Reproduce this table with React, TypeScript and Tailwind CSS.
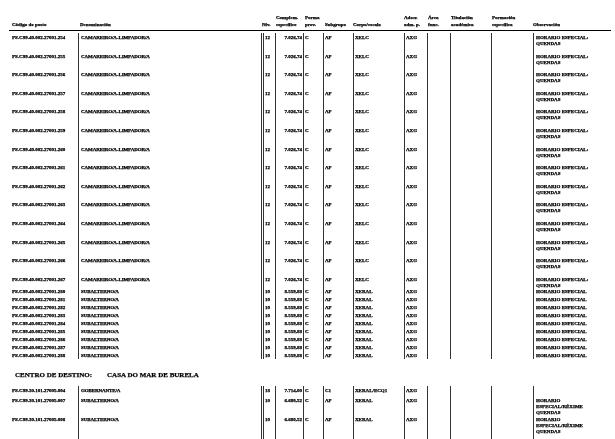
const grid =
  "grid grid-cols-[78px_183px_14px_28px_20px_30px_51px_23px_23px_41px_42px_1fr]";

type Post = {
  code: string;
  name: string;
  niv: string;
  comp: string;
  sub: string;
  corpo: string;
  obs: string[];
  h: string;
};

const camareiro = (n: number, h: string): Post => ({
  code: `PS.C99.40.002.27001.${n}`,
  name: "CAMAREIRO/A-LIMPADOR/A",
  niv: "12",
  comp: "7.026,74",
  sub: "AP",
  corpo: "XELC",
  obs: ["HORARIO ESPECIAL:", "QUENDAS"],
  h,
});

const subalterno = (n: number): Post => ({
  code: `PS.C99.40.002.27001.${n}`,
  name: "SUBALTERNO/A",
  niv: "10",
  comp: "8.559,88",
  sub: "AP",
  corpo: "XERAL",
  obs: ["HORARIO ESPECIAL"],
  h: "h-[8px]",
});

const firstBlock: Post[] = [
  ...[254, 255, 256, 257, 258, 259, 260, 261, 262, 263, 264, 265, 266].map((n) =>
    camareiro(n, "h-[18.6px]")
  ),
  camareiro(267, "h-[12px]"),
  ...[280, 281, 282, 283, 284, 285, 286, 287, 288].map(subalterno),
];

const burela: Post[] = [
  {
    code: "PS.C99.30.101.27005.004",
    name: "GOBERNANTE/A",
    niv: "18",
    comp: "7.714,00",
    sub: "C1",
    corpo: "XERAL/ECQ1",
    obs: [],
    h: "h-[10px]",
  },
  {
    code: "PS.C99.30.101.27005.007",
    name: "SUBALTERNO/A",
    niv: "10",
    comp: "6.680,52",
    sub: "AP",
    corpo: "XERAL",
    obs: ["HORARIO", "ESPECIAL/RÉXIME", "QUENDAS"],
    h: "h-[19px]",
  },
  {
    code: "PS.C99.30.101.27005.008",
    name: "SUBALTERNO/A",
    niv: "10",
    comp: "6.680,52",
    sub: "AP",
    corpo: "XERAL",
    obs: ["HORARIO", "ESPECIAL/RÉXIME", "QUENDAS"],
    h: "h-[24px]",
  },
];

function PostRow({ p }: { p: Post }) {
  const cell = "border-l border-[#333] pt-[2px]";
  return (
    <div className={`${grid} ${p.h}`}>
      <div className="pl-[12px] pt-[2px]">{p.code}</div>
      <div className={`${cell} pl-[2px] tracking-[-0.1px]`}>{p.name}</div>
      <div className="border-l-[3px] border-double border-[#333] pl-[1px] pt-[2px]">{p.niv}</div>
      <div className={`${cell} pr-[1px] text-right`}>{p.comp}</div>
      <div className={`${cell} pl-[1px]`}>C</div>
      <div className={`${cell} pl-[1px]`}>{p.sub}</div>
      <div className={`${cell} pl-[1px]`}>{p.corpo}</div>
      <div className={`${cell} pl-[1px]`}>AXG</div>
      <div className={cell} />
      <div className={cell} />
      <div className={cell} />
      <div className={`${cell} pl-[2px]`}>
        {p.obs.map((line) => (
          <div key={line}>{line}</div>
        ))}
      </div>
    </div>
  );
}

export default function App() {
  return (
    <div className="h-[439px] w-[615px] overflow-hidden bg-white font-['Liberation_Serif',serif] font-bold text-black antialiased will-change-transform [-webkit-text-stroke:0.25px_black]">
      <div className="mr-[4px] ml-[9px] border-b border-black pb-[2px] pt-[15px]">
        <div className={`${grid} -ml-[9px] items-end whitespace-nowrap text-[5px] leading-[6.5px]`}>
          <div className="pl-[12px]">Código do posto</div>
          <div className="pl-[2px]">Denominación</div>
          <div className="pl-[1px]">Nív.</div>
          <div className="pl-[1px]">
            Complem.
            <br />
            específico
          </div>
          <div className="pl-[2px]">
            Forma
            <br />
            prov.
          </div>
          <div className="pl-[2px]">Subgrupo</div>
          <div>Corpo/escala</div>
          <div>
            Adscr.
            <br />
            adm. p.
          </div>
          <div className="pl-[1px]">
            Área
            <br />
            func.
          </div>
          <div className="pl-[1px]">
            Titulación
            <br />
            académica
          </div>
          <div className="pl-[1px]">
            Formación
            <br />
            específica
          </div>
          <div>Observación</div>
        </div>
      </div>

      <div className="mt-[2px] whitespace-nowrap pb-[2px] text-[5px] leading-[6px]">
        {firstBlock.map((p) => (
          <PostRow key={p.code} p={p} />
        ))}
      </div>

      <div className="mt-[10px] flex gap-[15px] pl-[15px] text-[7px] leading-[8px]">
        <span>CENTRO DE DESTINO:</span>
        <span>CASA DO MAR DE BURELA</span>
      </div>

      <div className="mt-[7px] whitespace-nowrap text-[5px] leading-[6px]">
        {burela.map((p) => (
          <PostRow key={p.code} p={p} />
        ))}
      </div>
    </div>
  );
}
